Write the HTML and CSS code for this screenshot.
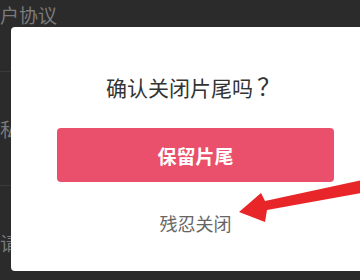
FILE: index.html
```html
<!DOCTYPE html>
<html lang="zh">
<head>
<meta charset="utf-8">
<link rel="stylesheet" href="styles.css">
</head>
<body>
<div class="list">
  <div class="row"><span class="row-text">用户协议</span></div>
  <div class="row"><span class="row-text">隐私政策</span></div>
  <div class="row"><span class="row-text">邀请好友</span></div>
</div>
<div class="dialog">
  <div class="title">确认关闭片尾吗<span class="qmark">？</span></div>
  <div class="btn">保留片尾</div>
  <div class="cancel">残忍关闭</div>
</div>
<svg class="arrow" width="130" height="50" viewBox="230 175 130 50">
  <polygon points="239,212 261,193 265,201 362,180 362,193 267,210 265,222" fill="#e8262a"/>
</svg>
</body>
</html>
```
FILE: styles.css
```css
html, body {
  margin: 0;
  padding: 0;
}
body {
  width: 360px;
  height: 280px;
  overflow: hidden;
  background: #2b2b2b;
  font-family: "Noto Sans CJK SC", "Noto Sans", sans-serif;
  position: relative;
}
.list {
  margin-top: -42px;
}
.row {
  height: 113px;
  border-bottom: 1px solid #3a3a3a;
  display: flex;
  align-items: center;
}
.row-text {
  margin-left: -19px;
  font-size: 19px;
  color: #7a7a7a;
}
.dialog {
  position: absolute;
  left: 11px;
  top: 27px;
  width: 369px;
  height: 244px;
  box-sizing: border-box;
  background: #ffffff;
  border-radius: 4px;
  padding-top: 46px;
  display: flex;
  flex-direction: column;
  align-items: center;
}
.title {
  font-size: 21px;
  line-height: 25px;
  height: 25px;
  color: #333333;
  margin-left: -4px;
}
.qmark {
  font-size: 24px;
  line-height: 25px;
  margin-left: 4px;
}
.btn {
  margin-top: 30px;
  width: 277px;
  height: 54px;
  border-radius: 4px;
  background: #ea506c;
  color: #ffffff;
  font-size: 19px;
  font-weight: bold;
  display: flex;
  align-items: center;
  justify-content: center;
}
.cancel {
  margin-top: 30px;
  font-size: 18px;
  line-height: 22px;
  color: #666666;
}
.arrow {
  position: absolute;
  left: 230px;
  top: 175px;
}
```
